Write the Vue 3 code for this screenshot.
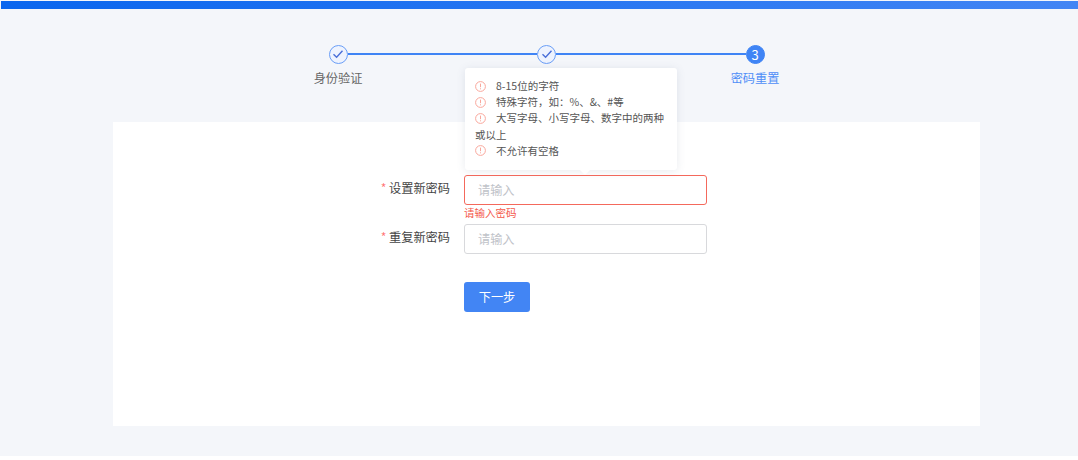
<template>
  <div class="page">
    <div class="top_bar"></div>

    <div class="steps">
      <div v-for="(step, i) in steps" :key="i" class="step" :class="{ active: step.active }">
        <div class="step_head">
          <div class="line" :class="{ hidden: i === 0 }"></div>
          <div class="circle">
            <svg v-if="!step.active" width="12" height="10" viewBox="0 0 12 10">
              <path d="M1.5 5.2 4.6 8.2 10.5 1.8" fill="none" stroke="#4a6fd8" stroke-width="1.4" />
            </svg>
            <span v-else>{{ i + 1 }}</span>
          </div>
          <div class="line" :class="{ hidden: i === steps.length - 1 }"></div>
        </div>
        <div class="step_name">{{ step.name }}</div>
      </div>
    </div>

    <div class="card">
      <form class="form" @submit.prevent>
        <div class="row first">
          <label class="label"><i>*</i> 设置新密码</label>
          <div class="field">
            <div class="tip">
              <p v-for="rule in rules" :key="rule">
                <svg class="tip_icon" width="11" height="11" viewBox="0 0 11 11">
                  <circle cx="5.5" cy="5.5" r="4.9" fill="none" stroke="#f9a79c" stroke-width="1" />
                  <path d="M5.5 2.6v3.6M5.5 7.3v1" fill="none" stroke="#f9a79c" stroke-width="1" />
                </svg>{{ rule }}
              </p>
            </div>
            <input class="input error" type="password" placeholder="请输入" />
            <div class="error_text">请输入密码</div>
          </div>
        </div>
        <div class="row second">
          <label class="label"><i>*</i> 重复新密码</label>
          <div class="field">
            <input class="input" type="password" placeholder="请输入" />
          </div>
        </div>
        <button class="next" type="submit">下一步</button>
      </form>
    </div>
  </div>
</template>

<script setup>
// the middle step's name sits under the tooltip in the picture, so it stays empty
const steps = [
  { name: "身份验证", active: false },
  { name: "", active: false },
  { name: "密码重置", active: true },
];

const rules = [
  "8-15位的字符",
  "特殊字符，如：%、&、#等",
  "大写字母、小写字母、数字中的两种或以上",
  "不允许有空格",
];
</script>

<style scoped>
.page {
  width: 1078px;
  height: 456px;
  box-sizing: border-box;
  padding: 1px 0 0 1px;
  background: #f4f6fa;
  font-family: "Noto Sans CJK SC", "Liberation Sans", sans-serif;
  font-size: 12.2px;
  color: #555;
}

.top_bar {
  height: 8px;
  background: linear-gradient(90deg, #0a66ee, #4285f4);
}

.steps {
  display: grid;
  grid-template-columns: repeat(3, 208.5px);
  justify-content: center;
  width: 626px;
  height: 43px;
  margin: 35px 0 0 232.5px;
}

.step {
  display: flex;
  flex-direction: column;
  align-items: center;
}

.step_head {
  display: flex;
  align-items: center;
  width: 100%;
  height: 20px;
}

.line {
  flex: 1;
  height: 2px;
  background: #3f84f5;
}

.line.hidden {
  background: transparent;
}

.circle {
  width: 19px;
  height: 19px;
  box-sizing: border-box;
  display: flex;
  align-items: center;
  justify-content: center;
  border: 1.5px solid #6a9ef7;
  border-radius: 50%;
  background: #eef3fe;
  color: #fff;
  font-size: 13px;
  line-height: 1;
}

.active .circle {
  background: #3f84f5;
  border-color: #3f84f5;
}

.step_name {
  margin-top: 6px;
  line-height: 17px;
  color: #666;
}

.active .step_name {
  color: #4f8ef7;
}

.card {
  width: 867px;
  height: 304px;
  box-sizing: border-box;
  margin: 35px 0 0 112px;
  padding-top: 53px;
  background: #fff;
}

.form {
  margin-left: 351px;
}

.row {
  display: flex;
  align-items: flex-start;
}

.second {
  margin-top: 4px;
}

.label {
  width: 100px;
  margin-left: -114px;
  margin-right: 14px;
  text-align: right;
  line-height: 26px;
  color: #444;
  white-space: nowrap;
}

.label i {
  font-style: normal;
  color: #f77;
}

.field {
  position: relative;
  width: 243px;
}

.input {
  display: block;
  width: 100%;
  height: 30px;
  box-sizing: border-box;
  padding: 0 13px;
  border: 1px solid #d8d9dc;
  border-radius: 3px;
  outline: none;
  background: #fff;
  font: inherit;
}

.input::placeholder {
  color: #bfc3c9;
}

.input.error {
  border-color: #f4695c;
}

.error_text {
  margin-top: 1px;
  line-height: 14px;
  font-size: 10.5px;
  color: #f4594c;
}

.tip {
  position: absolute;
  left: 1px;
  top: -107px;
  width: 212px;
  height: 102px;
  box-sizing: border-box;
  padding: 10px;
  border-radius: 3px;
  background: #fff;
  box-shadow: 0 1px 8px rgba(80, 90, 120, 0.13);
  font-size: 10.5px;
  line-height: 16.2px;
  color: #555;
}

.tip::after {
  content: "";
  position: absolute;
  left: 115px;
  bottom: -5px;
  border-left: 5px solid transparent;
  border-right: 5px solid transparent;
  border-top: 5px solid #fff;
}

.tip p {
  margin: 0;
}

.tip_icon {
  margin-right: 10px;
  vertical-align: -1.5px;
}

.next {
  display: block;
  width: 66px;
  height: 30px;
  margin-top: 28px;
  padding: 0;
  border: none;
  border-radius: 3px;
  background: #4285f4;
  color: #fff;
  font: inherit;
  font-size: 12.2px;
}
</style>

<style>
html, body {
  background: #fff;
}
</style>
